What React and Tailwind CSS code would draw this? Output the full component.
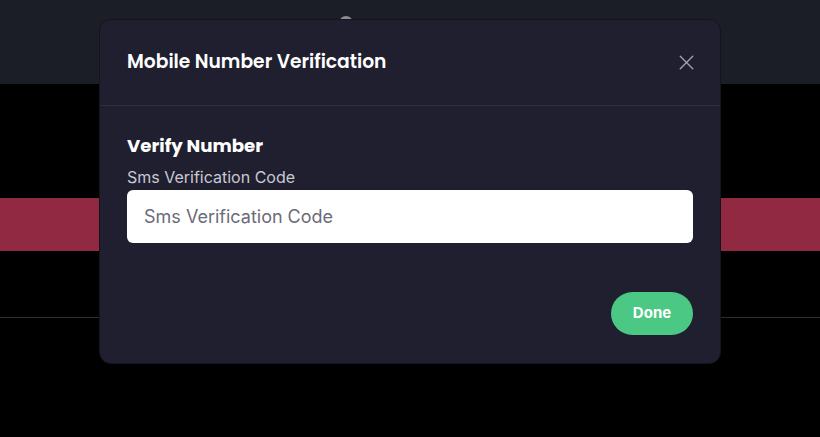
import { X } from 'lucide-react';

const App = () => {
  return (
    <div className="relative h-[437px] w-[820px] overflow-hidden bg-black font-['Inter',sans-serif]">
      {/* page behind the modal */}
      <div className="flex h-[84px] justify-center bg-[#1c1e27]">
        <div className="mt-[16px] ml-[-128px] h-[14px] w-[14px] rounded-full bg-[#8a8c94]" />
      </div>
      <div className="mt-[114px] h-[53px] bg-[#922943]" />
      <div className="mt-[66px] h-px bg-[#2e2e2e]" />

      {/* modal */}
      <div className="absolute inset-0">
        <div className="mx-auto mt-[19px] w-[622px] overflow-hidden rounded-[12px] border border-[#14141c] bg-[#1f1f30]">
          <div className="flex h-[86px] items-center justify-between border-b border-[#2d2d40] pl-[27px] pr-[21px]">
            <h2 className="font-['Poppins','Open_Sans',sans-serif] text-[18.7px] font-semibold text-white">
              Mobile Number Verification
            </h2>
            <X className="h-[25px] w-[25px] text-[#a3a3b0]" strokeWidth={1.3} />
          </div>
          <div className="px-[27px] pt-[26px] pb-[28px]">
            <h3 className="font-['Poppins','Open_Sans',sans-serif] text-[18.2px] leading-[28px] font-bold text-white">
              Verify Number
            </h3>
            <label className="mt-[5px] block text-[16px] leading-[24px] text-[#c9c9d2]">
              Sms Verification Code
            </label>
            <input
              type="text"
              placeholder="Sms Verification Code"
              className="mt-[1px] h-[53px] w-full rounded-[6px] bg-white px-[17px] text-[18px] text-[#333] outline-none placeholder:text-[#6b6b78]"
            />
            <div className="mt-[49px] flex justify-end">
              <button className="h-[43px] w-[82px] rounded-full bg-[#4cc885] text-[15px] font-bold text-white">
                Done
              </button>
            </div>
          </div>
        </div>
      </div>
    </div>
  );
};

export default App;
